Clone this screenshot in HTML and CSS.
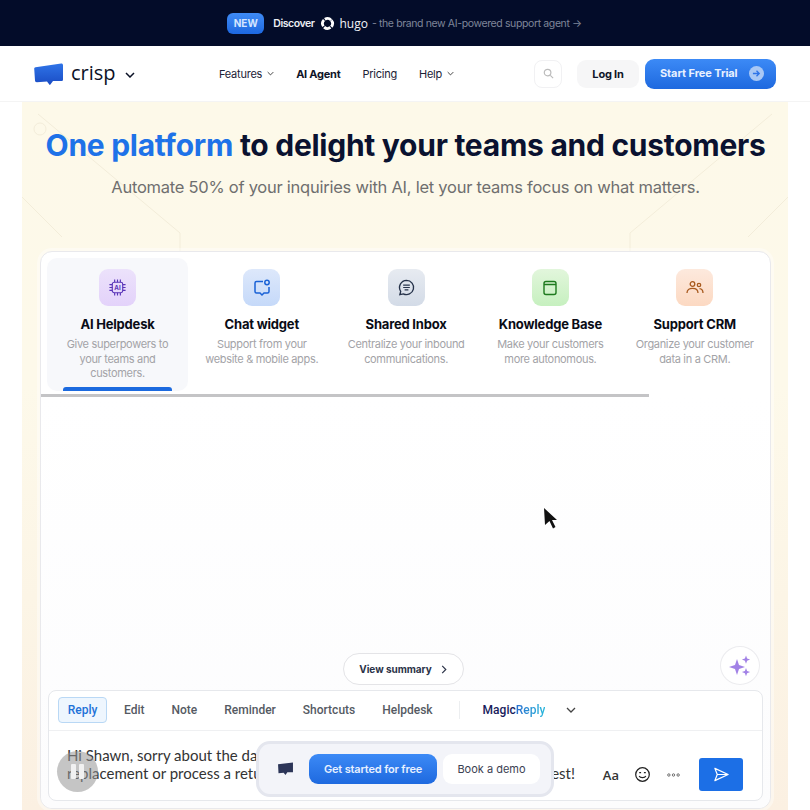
FILE: index.html
```html
<!DOCTYPE html>
<html lang="en">
<head>
<meta charset="utf-8">
<title>Crisp</title>
<link rel="stylesheet" href="styles.css">
</head>
<body>
<header class="banner">
  <span class="new-badge">NEW</span>
  <span class="discover">Discover</span>
  <svg class="hugo-mark" viewBox="0 0 16 16" width="15" height="15"><circle cx="8" cy="8" r="5.300" fill="none" stroke="#fff" stroke-width="3" stroke-dasharray="7.100 1.230" transform="rotate(-39 8 8)"/></svg>
  <span class="hugo">hugo</span>
  <span class="banner-tail">- the brand new AI-powered support agent →</span>
</header>
<nav class="nav">
  <div class="brand">
    <svg class="brand-mark" viewBox="0 0 30 23" width="30" height="23"><defs><linearGradient id="bm" x1="0" y1="0" x2="0" y2="1"><stop offset="0" stop-color="#2f74e8"/><stop offset="1" stop-color="#1a4cc4"/></linearGradient></defs><path d="M1.500 4.200 27.200.4c1-.1 1.800.6 1.800 1.600v14.400c0 .9-.7 1.600-1.600 1.600H19l-2.600 3.600c-.3.4-.8.4-1.100 0L13 18.600 2.800 19.200C1.800 19.200 1 18.500 1 17.500L.2 5.600c0-.7.5-1.300 1.300-1.400Z" fill="url(#bm)"/></svg>
    <span class="brand-name">crisp</span>
    <svg class="chev-brand" viewBox="0 0 10 6" width="10" height="6"><path d="M1 1l4 4 4-4" fill="none" stroke="#0b1126" stroke-width="1.500"/></svg>
  </div>
  <div class="nav-links">
    <span class="nav-link">Features <svg viewBox="0 0 10 6" width="7" height="5"><path d="M1 1l4 4 4-4" fill="none" stroke="#333" stroke-width="1.300"/></svg></span>
    <span class="nav-link nav-strong">AI Agent</span>
    <span class="nav-link">Pricing</span>
    <span class="nav-link">Help <svg viewBox="0 0 10 6" width="7" height="5"><path d="M1 1l4 4 4-4" fill="none" stroke="#333" stroke-width="1.300"/></svg></span>
  </div>
  <div class="nav-actions">
    <span class="search-btn"><svg viewBox="0 0 12 12" width="11" height="11"><circle cx="5" cy="5" r="3.600" fill="none" stroke="#bbb" stroke-width="1.300"/><path d="M8 8l3 3" stroke="#bbb" stroke-width="1.300"/></svg></span>
    <span class="login">Log In</span>
    <span class="trial">Start Free Trial
      <span class="trial-arrow"><svg viewBox="0 0 10 10" width="9" height="9"><path d="M1 5h7M5 2l3 3-3 3" fill="none" stroke="#2f74e8" stroke-width="1.500"/></svg></span>
    </span>
  </div>
</nav>
<main class="hero">
  <svg class="hero-lines" viewBox="0 0 766 708" width="766" height="708"><g fill="none" stroke="#f3edda" stroke-width="1"><path d="M16 12 158 131V150M0 95 40 135M750 12 608 131V150M766 95 726 135"/><circle cx="18" cy="27" r="6"/></g></svg>
  <h1 class="title"><span class="title-accent">One platform</span> to delight your teams and customers</h1>
  <p class="subtitle">Automate 50% of your inquiries with AI, let your teams focus on what matters.</p>
  <section class="panel">
    <div class="tabs">
      <article class="tab tab-active">
        <span class="tab-icon icon-purple"><svg viewBox="0 0 20 20" width="19" height="19"><g fill="none" stroke="#5a34b8" stroke-width="1.200"><rect x="4.500" y="4.500" width="11" height="11" rx="2"/><path d="M7 1.500v3M10 1.500v3M13 1.500v3M7 15.500v3M10 15.500v3M13 15.500v3M1.500 7h3M1.500 10h3M1.500 13h3M15.500 7h3M15.500 10h3M15.500 13h3"/></g><text x="10" y="12.400" class="chip-text">AI</text></svg></span>
        <h2 class="tab-title">AI Helpdesk</h2>
        <p class="tab-text">Give superpowers to your teams and customers.</p>
        <span class="tab-bar"></span>
      </article>
      <article class="tab">
        <span class="tab-icon icon-blue"><svg viewBox="0 0 20 20" width="20" height="20"><path d="M11 3.500H4.500a1.500 1.500 0 0 0-1.500 1.500v8.500A1.500 1.500 0 0 0 4.500 15H8l2 2 2-2h3.500a1.500 1.500 0 0 0 1.500-1.500V9" fill="none" stroke="#1a62d6" stroke-width="1.500"/><circle cx="15" cy="4.500" r="2.200" fill="none" stroke="#1a62d6" stroke-width="1.500"/></svg></span>
        <h2 class="tab-title">Chat widget</h2>
        <p class="tab-text">Support from your website &amp; mobile apps.</p>
      </article>
      <article class="tab">
        <span class="tab-icon icon-slate"><svg viewBox="0 0 20 20" width="19" height="19"><path d="M10 2.500a7.500 7.500 0 1 1-3.400 14.200L3 17.500l.9-3.400A7.500 7.500 0 0 1 10 2.500Z" fill="none" stroke="#25324a" stroke-width="1.400"/><path d="M6.500 7.500h7M6.500 10h7M8 12.500h4" stroke="#25324a" stroke-width="1.200"/></svg></span>
        <h2 class="tab-title">Shared Inbox</h2>
        <p class="tab-text">Centralize your inbound communications.</p>
      </article>
      <article class="tab">
        <span class="tab-icon icon-green"><svg viewBox="0 0 20 20" width="20" height="20"><path d="M4 5.500C4 4 4.800 3.500 6 3.500h8c1.300 0 2 .7 2 2v9c0 1.300-.7 2-2 2H6c-1.300 0-2-.7-2-2ZM4 6.500h12" fill="none" stroke="#1e7a1e" stroke-width="1.400"/></svg></span>
        <h2 class="tab-title">Knowledge Base</h2>
        <p class="tab-text">Make your customers more autonomous.</p>
      </article>
      <article class="tab">
        <span class="tab-icon icon-orange"><svg viewBox="0 0 20 20" width="20" height="20"><g fill="none" stroke="#a85a1e" stroke-width="1.300"><circle cx="7.500" cy="6" r="2.300"/><circle cx="14" cy="7" r="1.700"/><path d="M2 15c0-3 2.200-4.700 5.500-4.700S13 12 13 15M14.500 10.600c2 .2 3.500 1.800 3.500 4.400"/></g></svg></span>
        <h2 class="tab-title">Support CRM</h2>
        <p class="tab-text">Organize your customer data in a CRM.</p>
      </article>
    </div>
    <div class="progress"><span class="progress-fill"></span></div>
    <div class="stage">
      <div class="summary-row">
        <span class="summary">View summary <svg viewBox="0 0 6 10" width="6" height="9"><path d="M1 1l4 4-4 4" fill="none" stroke="#2b3348" stroke-width="1.300"/></svg></span>
        <span class="spark"><svg viewBox="0 0 24 24" width="24" height="24"><path d="M9 5l2 6 6 2-6 2-2 6-2-6-6-2 6-2Z M18 1.500l1.100 3 3 1.100-3 1.100-1.100 3-1.100-3-3-1.100 3-1.100Z M18 14l1.100 3 3 1.100-3 1.100-1.100 3-1.100-3-3-1.100 3-1.100Z" fill="#a282e6"/></svg></span>
      </div>
      <div class="composer">
        <div class="composer-tabs">
          <span class="ctab ctab-active">Reply</span>
          <span class="ctab">Edit</span>
          <span class="ctab">Note</span>
          <span class="ctab">Reminder</span>
          <span class="ctab">Shortcuts</span>
          <span class="ctab">Helpdesk</span>
          <span class="ctab-sep"></span>
          <span class="magic"><span class="magic-dark">Magic</span><span class="magic-light">Reply</span></span>
          <svg class="magic-chev" viewBox="0 0 10 6" width="10" height="6"><path d="M1 1l4 4 4-4" fill="none" stroke="#444" stroke-width="1.300"/></svg>
        </div>
        <div class="composer-body">
          <div class="message">
            <span class="message-line">Hi Shawn, sorry about the dar</span>
            <span class="message-line"><span>replacement or process a retu</span><span>est!</span></span>
          </div>
          <div class="composer-tools">
            <span class="tool-aa">Aa</span>
            <svg viewBox="0 0 18 18" width="17" height="17"><circle cx="9" cy="9" r="7.200" fill="none" stroke="#222" stroke-width="1.300"/><path d="M5.500 10.500c1 2.400 6 2.400 7 0" fill="none" stroke="#222" stroke-width="1.300"/><path d="M5.500 7h2M10.500 7h2" stroke="#222" stroke-width="1.300"/></svg>
            <svg class="tool-dots" viewBox="0 0 14 4" width="13" height="4"><g fill="none" stroke="#555" stroke-width=".9"><circle cx="2" cy="2" r="1.300"/><circle cx="7" cy="2" r="1.300"/><circle cx="12" cy="2" r="1.300"/></g></svg>
            <span class="send"><svg viewBox="0 0 18 18" width="17" height="17"><path d="M2 2.500 16 9 2 15.500 4.500 9ZM4.500 9H16" fill="none" stroke="#fff" stroke-width="1.300" stroke-linejoin="round"/></svg></span>
          </div>
        </div>
      </div>
    </div>
  </section>
</main>
<svg class="cursor" viewBox="0 0 14 22" width="14" height="22"><path d="M0 0 13 12H8l3.500 7-2.500 1.500L5.500 13 1 17Z" fill="#111"/></svg>
<span class="pause"><span class="pause-bar"></span><span class="pause-bar"></span></span>
<div class="cta">
  <svg class="cta-mark" viewBox="0 0 18 15" width="17" height="14"><path d="M1 2.500 17 .5V11H11L9 14 7 11.500 1.500 12Z" fill="#2c3558"/></svg>
  <span class="cta-primary">Get started for free</span>
  <span class="cta-secondary">Book a demo</span>
</div>
</body>
</html>
```
FILE: styles.css
```css
* { box-sizing: border-box; }
html, body { margin: 0; height: 810px; overflow: hidden; }
body { position: relative; font-family: Inter, "Liberation Sans", sans-serif; background: #fff; color: #0b1126; }
h1, h2, p { margin: 0; }

.banner { height: 46px; background: #030c29; display: flex; align-items: center; justify-content: center; padding-right: 1px; font-size: 10.500px; }
.new-badge { width: 37px; height: 21px; margin-right: 9px; display: flex; align-items: center; justify-content: center; border-radius: 6px; background: linear-gradient(#3f8bf5, #1d68e0); color: #d5e6ff; font-weight: 700; font-size: 10px; }
.discover { color: #eceef4; font-weight: 600; letter-spacing: -.45px; }
.hugo-mark { margin: 0 4px 0 6px; }
.hugo { color: #f2f3f7; font-family: "Open Sans", sans-serif; font-size: 12px; margin-right: 4px; }
.banner-tail { color: #7f8699; letter-spacing: -.38px; }

.nav { height: 56px; display: flex; align-items: center; padding: 0 34px; background: #fff; border-bottom: 1px solid #f4f4f4; }
.brand { width: 185px; display: flex; align-items: center; }
.brand-mark { margin-top: 2px; }
.brand-name { margin: -2px 0 0 7px; font-family: "Open Sans", sans-serif; font-size: 20px; font-weight: 500; line-height: 24px; color: #0b1126; }
.chev-brand { margin-left: 9px; margin-top: 2px; }
.nav-links { display: flex; align-items: center; gap: 22px; font-size: 11px; letter-spacing: -.24px; }
.nav-link { color: #1c2236; display: flex; align-items: center; gap: 5px; }
.nav-strong { font-weight: 700; color: #0f1528; }
.nav-actions { margin-left: auto; display: flex; align-items: center; }
.search-btn { width: 28px; height: 28px; border: 1px solid #f1f1f3; border-radius: 8px; display: flex; align-items: center; justify-content: center; }
.login { width: 62px; height: 28px; margin-left: 15px; display: flex; align-items: center; justify-content: center; background: #f6f6f7; border-radius: 9px; font-size: 11px; font-weight: 700; letter-spacing: -.2px; color: #0f1528; }
.trial { width: 131px; height: 30px; margin-left: 6px; padding: 0 5px 1px 15px; display: flex; align-items: center; justify-content: space-between; background: linear-gradient(#3c8af6, #1e69df); border-radius: 9px; color: #e8f1ff; font-size: 11px; font-weight: 700; letter-spacing: -.08px; }
.trial-arrow { width: 15px; height: 15px; margin-right: 7px; border-radius: 50%; background: #a9c8f5; display: flex; align-items: center; justify-content: center; }

.hero { position: relative; width: 766px; height: 708px; margin-left: 22px; padding: 25px 17px 0 18px; background: linear-gradient(#fdf9e9 0, #fdf9ea 40%, #fcf5e6 70%, #fbf0e2 100%); }
.hero-lines { position: absolute; left: 0; top: 0; }
.title { position: relative; text-align: center; font-size: 30px; line-height: 36px; font-weight: 700; letter-spacing: -.27px; white-space: nowrap; color: #0a1230; }
.title-accent { color: #1e72e8; }
.subtitle { position: relative; margin-top: 13px; text-align: center; font-size: 16.500px; line-height: 22px; letter-spacing: -.25px; color: #6f6f6f; white-space: nowrap; }

.panel { position: relative; height: 558px; margin-top: 53px; display: flex; flex-direction: column; background: #fff; border: 1px solid #e9e9ec; border-radius: 12px; box-shadow: 0 0 0 3px rgba(255,255,255,.4); }
.tabs { height: 142px; padding: 6px 6px 0; display: flex; align-items: flex-start; gap: 3.300px; }
.tab { flex: 0 0 141px; height: 133px; position: relative; padding: 11px 8px 0; text-align: center; display: flex; flex-direction: column; align-items: center; border-radius: 10px; }
.tab-active { background: #f7f8fb; }
.tab-icon { width: 37px; height: 37px; border-radius: 9px; display: flex; align-items: center; justify-content: center; }
.icon-purple { background: linear-gradient(#ece2fb, #e3d2fa); }
.icon-blue { background: linear-gradient(#dde8fb, #c5d9f9); }
.icon-slate { background: linear-gradient(#e7ebf1, #d3dbe7); }
.icon-green { background: linear-gradient(#e2f6dc, #c6f0bf); }
.icon-orange { background: linear-gradient(#fde9dd, #fcd9c2); }
.chip-text { font-family: Inter, sans-serif; font-size: 6.500px; font-weight: 700; fill: #5a34b8; text-anchor: middle; }
.tab-title { margin-top: 9px; font-size: 13px; line-height: 18px; font-weight: 700; letter-spacing: -.2px; color: #0a0c16; white-space: nowrap; }
.tab-text { margin-top: 4px; font-size: 11px; line-height: 14.500px; letter-spacing: -.32px; color: #a3a3a7; width: 125px; }
.tab-bar { position: absolute; left: 16px; bottom: 0; width: 109px; height: 4px; border-radius: 3px 3px 0 0; background: #1c6adf; }
.progress { height: 3px; background: transparent; }
.progress-fill { display: block; width: 608px; height: 3px; background: #c4c4c6; }

.stage { flex: 1; display: flex; flex-direction: column; justify-content: flex-end; padding: 0 7px 7px; background: linear-gradient(#fff, #fcfcfd); border-radius: 0 0 12px 12px; }
.summary-row { position: relative; display: flex; justify-content: center; padding-right: 5px; margin-bottom: 5px; }
.summary { width: 121px; height: 32px; display: flex; align-items: center; justify-content: center; gap: 9px; background: #fff; border: 1px solid #e4e4e7; border-radius: 16px; font-size: 10px; font-weight: 700; letter-spacing: -.05px; color: #2b3348; }
.spark { position: absolute; right: 3px; bottom: 0; width: 40px; height: 39px; display: flex; align-items: center; justify-content: center; background: #fff; border: 1px solid #ececef; border-radius: 50%; }
.composer { height: 111px; background: #fff; border: 1px solid #e6e8ec; border-radius: 8px; }
.composer-tabs { height: 40px; padding: 6px 9px 0; display: flex; align-items: flex-start; border-bottom: 1px solid #eff0f2; font-family: Roboto, sans-serif; font-size: 12px; font-weight: 500; letter-spacing: 0; color: #555a63; }
.ctab { height: 26px; margin-right: 27px; display: flex; align-items: center; }
.ctab:first-child { margin-right: 17px; }
.ctab-active { width: 49px; justify-content: center; background: #eef6fe; border: 1px solid #b9d8f5; border-radius: 4px; color: #1e72d8; }
.ctab-sep { width: 1px; height: 18px; margin: 4px 23px 0 -1px; background: #eceef0; }
.magic { height: 26px; display: flex; align-items: center; font-weight: 500; }
.magic-dark { color: #191b5c; }
.magic-light { background: linear-gradient(90deg, #2a6fd0, #28b8dc); -webkit-background-clip: text; background-clip: text; color: transparent; }
.magic-chev { margin: 10px 0 0 21px; }
.composer-body { position: relative; padding: 15px 18px 0; }
.message { width: 508px; font-family: Lato, sans-serif; font-size: 15px; line-height: 18px; color: #333; white-space: nowrap; }
.message-line { display: flex; justify-content: space-between; }
.composer-tools { position: absolute; right: 19px; top: 27px; display: flex; align-items: center; }
.tool-aa { margin-right: 15px; font-family: "Open Sans", sans-serif; font-size: 13px; font-weight: 600; color: #333; }
.tool-dots { margin: 0 19px 0 16px; }
.send { width: 44px; height: 33px; display: flex; align-items: center; justify-content: center; background: #1c6fe6; border-radius: 3px; }

.cursor { position: absolute; left: 544px; top: 508px; }
.pause { position: absolute; left: 57px; top: 751px; width: 41px; height: 41px; display: flex; align-items: center; justify-content: center; gap: 3px; border-radius: 50%; background: rgba(150,150,150,.55); }
.pause-bar { width: 5px; height: 15px; border-radius: 1px; background: #f1f1f1; }
.cta { position: absolute; left: 256px; top: 741px; width: 298px; height: 56px; padding-left: 18px; display: flex; align-items: center; background: #f3f4f9; border: 3px solid #e4e6ee; border-radius: 14px; }
.cta-mark { flex: none; }
.cta-primary { width: 128px; height: 30px; margin-left: 15px; padding-bottom: 1px; display: flex; align-items: center; justify-content: center; background: linear-gradient(#3c8af6, #1e69df); border-radius: 9px; color: #e8f1ff; font-size: 11px; font-weight: 600; letter-spacing: -.16px; white-space: nowrap; }
.cta-secondary { width: 97px; height: 30px; margin-left: 6px; padding-bottom: 1px; display: flex; align-items: center; justify-content: center; background: #fff; border-radius: 9px; color: #3b4152; font-size: 11px; white-space: nowrap; }
```
